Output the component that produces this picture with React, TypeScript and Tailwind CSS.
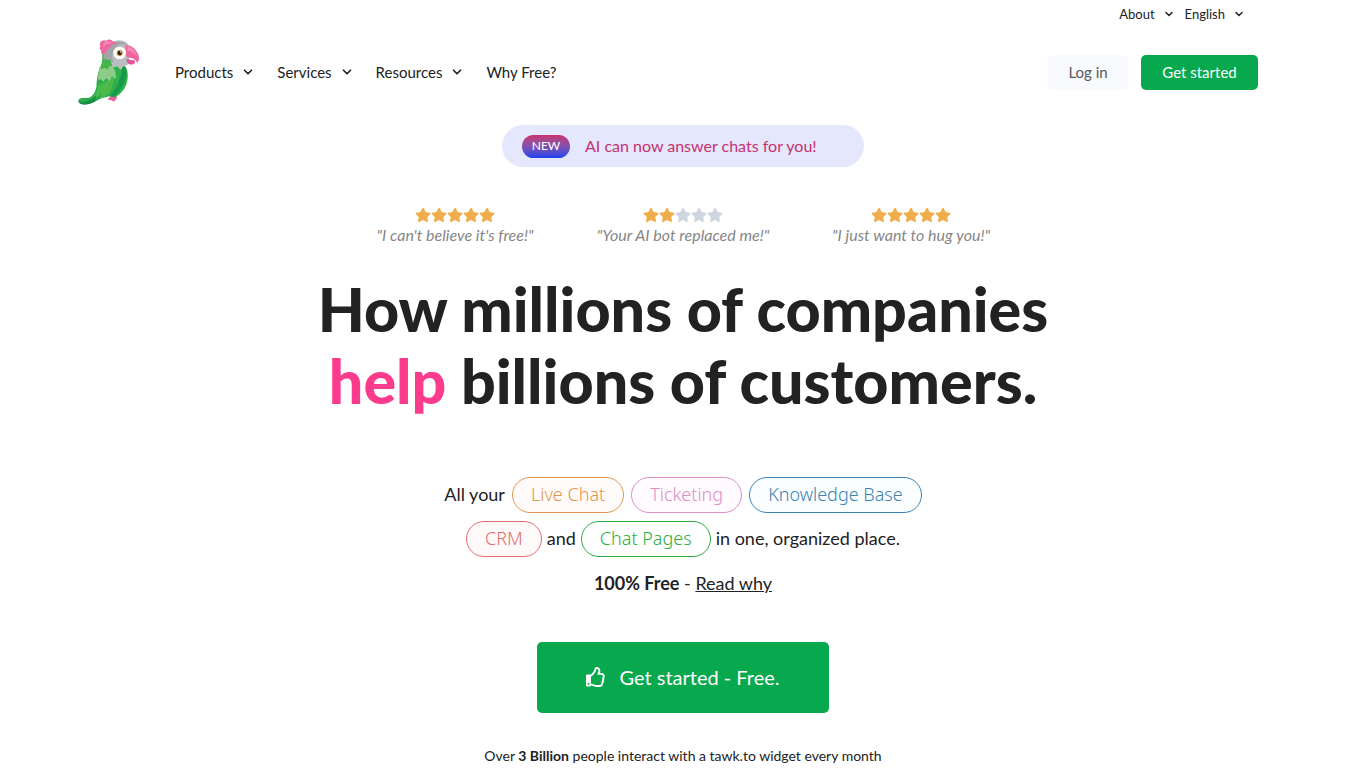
import { ReactNode } from "react";
import { ChevronDown } from "lucide-react";
import { FaRegThumbsUp, FaStar } from "react-icons/fa";

function Parrot() {
  return (
    <svg viewBox="24 27 189 198" className="h-[66px] w-[63px]" role="img" aria-label="tawk.to">
      <path d="M122 200q-4-9 5-9l12 7q5 5-1 9l-3 5q-7 5-9-1l-10-1q-4-6 6-10z" fill="#ee5ca0" />
      <path d="M97 72q0 22-3 40l18 24 50-20-12-60-40-2z" fill="#41b649" />
      <path d="M158 103q18 12 15 42-3 38-38 57l-30-5 6-85z" fill="#2db34a" />
      <path d="M168 112q8 42-34 89l-14-2q34-42 37-91z" fill="#179a4a" />
      <path d="M102 72q-2-32 30-38 6-3 16-3 24 1 30 20l-1 47q-8 14-17 10l-8 12-10-11-14 4-8-16-17-3z" fill="#bcbdc0" />
      <path d="M101 78q-2-30 24-41 32-8 45 7-26-5-38 14-10 18-1 39l-15-5-16-4z" fill="#a3a4a8" />
      <path d="M101 74q-11-2-7-13-8-4-3-13-5-10 4-15 8-4 13-1 12-8 22 3 7 0 12 4-17 3-25 16-6 8-16 19z" fill="#f0679f" />
      <path d="M106 35q13-4 20 4l-9 4-8-1-9 9q-3-11 6-16z" fill="#f58ab4" />
      <path d="M166 46q18-2 31 15 12 16 10 27l-4 11q-5-10-17-15-15 1-18-8z" fill="#ee66a1" />
      <path d="M170 86q13 5 24 5l1 7q-5 9-19 4-8-7-6-16z" fill="#e6549a" />
      <path d="M172 48q22 8 30 31-11-14-29-17z" fill="#f58bb8" />
      <circle cx="149" cy="69" r="19" fill="#fffdf5" />
      <circle cx="149" cy="69" r="9" fill="#b9853c" />
      <circle cx="149" cy="69" r="6" fill="#241812" />
      <circle cx="152" cy="66" r="2" fill="#fff" />
      <path d="M90 110q-10 28-11 62-5 24-21 31l-22 1q-12 2-11 10 3 9 18 9 18 0 34-9l20-11q25-1 35-24 9-24 4-55l-20-9z" fill="#2cad4b" />
      <path d="M83 168q-2 29-27 43 22-4 39-22l-5 17q39-8 43-67l-30 18z" fill="#4cba4b" />
      <path d="M25 214q12 5 29-2 14-4 25-16l-4 19q-17 9-32 9-16 0-18-10z" fill="#168f45" />
      <path d="M92 108q18-9 31-3 17 12 14 43l-11-9-7 14-10-9-9 11-8-8-8 5q0-28 8-44z" fill="#8ecb88" />
      <path d="M97 88q13-2 25 3l5 17-10 1-5 11-6-7-11 4-4-4q5-14 6-25z" fill="#44b54a" />
    </svg>
  );
}

function NavMenu({ label, small }: { label: string; small?: boolean }) {
  return (
    <button type="button" className="flex items-center gap-2">
      {label}
      <ChevronDown className={small ? "size-3" : "size-[14px]"} strokeWidth={3} />
    </button>
  );
}

function Review({ stars, quote }: { stars: number; quote: string }) {
  return (
    <figure className="flex w-[228px] flex-col items-center">
      <div className="flex h-4 items-center" role="img" aria-label={`${stars} out of 5 stars`}>
        {[1, 2, 3, 4, 5].map((n) => (
          <FaStar key={n} className={n <= stars ? "size-4 text-[#efad4d]" : "size-4 text-[#ced6e0]"} />
        ))}
      </div>
      <blockquote className="text-base leading-6 text-[#868686] italic">"{quote}"</blockquote>
    </figure>
  );
}

function Pill({ tone, children }: { tone: string; children: ReactNode }) {
  return (
    <a
      href="#"
      className={`flex h-9 items-center rounded-full border px-[18px] pb-0.5 font-['Noto_Sans','Open_Sans',sans-serif] text-lg leading-7 font-light ${tone}`}
    >
      {children}
    </a>
  );
}

export default function App() {
  return (
    <div className="min-h-screen bg-white font-[Lato,sans-serif] text-[#212223]">
      <header className="pr-[108px] pl-[78px]">
        <div className="flex justify-end gap-[10px] pt-1 pr-[13px] text-[13px] leading-5">
          <NavMenu label="About" small />
          <NavMenu label="English" small />
        </div>
        <div className="flex items-center pt-[15px]">
          <a href="#" className="mr-[34px]">
            <Parrot />
          </a>
          <nav className="flex items-center gap-[22px] text-[15px] leading-6">
            <NavMenu label="Products" />
            <NavMenu label="Services" />
            <NavMenu label="Resources" />
            <a href="#">Why Free?</a>
          </nav>
          <div className="ml-auto flex gap-[13px] text-[15px]">
            <a href="#" className="flex h-[35px] w-20 items-center justify-center rounded-[5px] bg-[#f8fafd] text-[#545960]">
              Log in
            </a>
            <a href="#" className="flex h-[35px] w-[117px] items-center justify-center rounded-[5px] bg-[#07a84e] text-white">
              Get started
            </a>
          </div>
        </div>
      </header>

      <main className="flex flex-col items-center pt-5">
        <a href="#" className="flex h-[42px] w-[362px] items-center gap-[15px] rounded-full bg-[#e5e7fd] px-5">
          <span className="flex h-[23px] w-12 items-center justify-center rounded-full bg-linear-to-b from-[#c92f6b] to-[#1740ef] text-xs text-white">
            NEW
          </span>
          <span className="text-base text-[#c7316f]">AI can now answer chats for you!</span>
        </a>

        <div className="mt-10 flex">
          <Review stars={5} quote="I can't believe it's free!" />
          <Review stars={2} quote="Your AI bot replaced me!" />
          <Review stars={5} quote="I just want to hug you!" />
        </div>

        <h1 className="mt-[26px] text-center text-[61px] leading-[72px] font-black">
          How millions of companies
          <br />
          <span className="text-[#fb3b8b]">help</span> billions of customers.
        </h1>

        <div className="mt-[60px] flex flex-col items-center gap-2 text-lg leading-7">
          <div className="flex items-center gap-[7px]">
            <span className="pb-0.5">All your</span>
            <Pill tone="border-[#e1954e] bg-[#fffbfa] text-[#e1954e]">Live Chat</Pill>
            <Pill tone="border-[#dc8fc8] bg-[#fffbff] text-[#dc8fc8]">Ticketing</Pill>
            <Pill tone="border-[#3c82b5] bg-[#fafeff] text-[#3c82b5]">Knowledge Base</Pill>
          </div>
          <div className="flex items-center gap-[5px]">
            <Pill tone="border-[#e16c70] bg-[#fffafa] text-[#e16c70]">CRM</Pill>
            <span className="pb-0.5">and</span>
            <Pill tone="border-[#2caf3c] bg-white text-[#2caf3c]">Chat Pages</Pill>
            <span className="pb-0.5">in one, organized place.</span>
          </div>
        </div>

        <p className="mt-3 text-lg leading-7">
          <strong className="font-bold">100% Free</strong> -{" "}
          <a href="#" className="underline">
            Read why
          </a>
        </p>

        <a
          href="#"
          className="mt-[45px] flex h-[71px] w-[292px] items-center justify-center gap-[13px] rounded-[5px] bg-[#07a84e] pb-0.5 text-xl text-white"
        >
          <FaRegThumbsUp className="size-5" />
          Get started - Free.
        </a>

        <p className="mt-[33px] text-sm leading-5">
          Over <strong className="font-bold">3 Billion</strong> people interact with a tawk.to widget every month
        </p>
      </main>
    </div>
  );
}
